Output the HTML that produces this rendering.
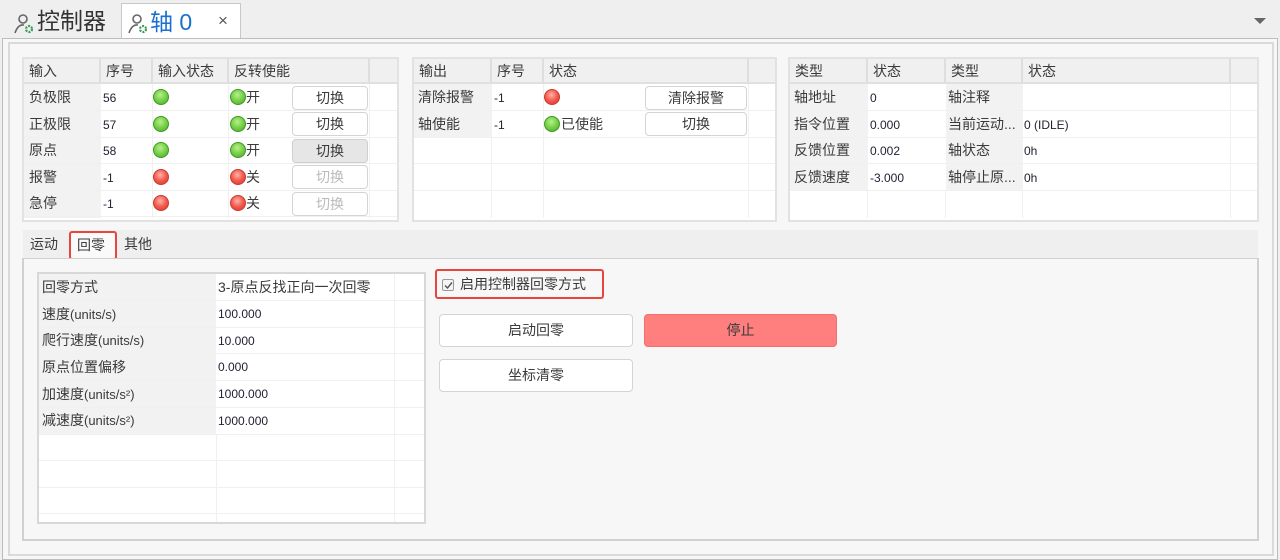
<!DOCTYPE html>
<html><head><meta charset="utf-8">
<style>
*{margin:0;padding:0;box-sizing:border-box}
body{width:1280px;height:560px;background:#efefef;position:relative;overflow:hidden;font-family:"Liberation Sans","Noto Sans CJK SC",sans-serif;color:#3a3a3a}
.a{position:absolute}
.cell{position:absolute;font-size:14px;line-height:26px;padding-left:5px;white-space:nowrap;overflow:hidden}
.num{font-size:12px;color:#223}
.hd{position:absolute;background:#f0f0f0;border-right:2px solid #dedede;border-bottom:2px solid #e0e0e0;font-size:14px;line-height:24px;padding-left:5px;color:#3a3a3a}
.hl{position:absolute;height:1px;background:#f0f0f0}
.vl{position:absolute;width:1px;background:#f0f0f0}
.led{position:absolute;width:16px;height:16px;border-radius:50%}
.g{background:radial-gradient(circle at 45% 35%,#b8ef8e 0,#7cd34c 45%,#4aa82a 100%);border:1px solid #3d9a26}
.r{background:radial-gradient(circle at 45% 35%,#ffb3a8 0,#f25a4e 50%,#d8342a 100%);border:1px solid #cc3a30}
.btn{position:absolute;background:#fff;border:1px solid #d4d4d4;border-radius:4px;text-align:center;font-size:14px;color:#3a3a3a}
.dis{color:#bbb}
.tbl{position:absolute;background:#fff;border:2px solid #e2e2e2}
</style></head><body>
<!-- tab bar -->
<div class="a" style="left:8px;top:4px;width:113px;height:34px">
<svg class="a" style="left:4px;top:9px" width="26" height="22" viewBox="0 0 26 22"><circle cx="11" cy="6" r="4" fill="none" stroke="#666" stroke-width="1.6"/><path d="M3 20 Q6 11 12 12" fill="none" stroke="#666" stroke-width="1.6"/><circle cx="17" cy="16" r="3" fill="none" stroke="#3a9a55" stroke-width="2.2" stroke-dasharray="2 1.2"/></svg>
<div class="a" style="left:29px;top:0;font-size:23px;line-height:34px;color:#333">控制器</div></div>
<div class="a" style="left:121px;top:3px;width:120px;height:36px;background:#fff;border:1px solid #c8c8c8;border-bottom:none">
<svg class="a" style="left:4px;top:9px" width="26" height="22" viewBox="0 0 26 22"><circle cx="11" cy="6" r="4" fill="none" stroke="#666" stroke-width="1.6"/><path d="M3 20 Q6 11 12 12" fill="none" stroke="#666" stroke-width="1.6"/><circle cx="17" cy="16" r="3" fill="none" stroke="#3a9a55" stroke-width="2.2" stroke-dasharray="2 1.2"/></svg>
<div class="a" style="left:28px;top:1px;font-size:23px;line-height:34px;color:#1b6fd1">轴 0</div>
<div class="a" style="left:96px;top:6px;font-size:17px;line-height:22px;color:#555">×</div></div>
<div class="a" style="left:1254px;top:18px;width:0;height:0;border-left:6px solid transparent;border-right:6px solid transparent;border-top:6px solid #666"></div>
<!-- outer panel -->
<div class="a" style="left:2px;top:38px;width:1276px;height:522px;background:#f7f7f7;border:1px solid #bdbdbd"></div>
<div class="a" style="left:8px;top:42px;width:1266px;height:514px;border:2px solid #dadada"></div>

<!-- Table 1 -->
<div class="tbl" style="left:22px;top:57px;width:377px;height:165px"></div>
<div class="hd" style="left:24px;top:59px;width:77px;height:25px">输入</div>
<div class="hd" style="left:101px;top:59px;width:52px;height:25px">序号</div>
<div class="hd" style="left:153px;top:59px;width:76px;height:25px">输入状态</div>
<div class="hd" style="left:229px;top:59px;width:141px;height:25px">反转使能</div>
<div class="hd" style="left:370px;top:59px;width:27px;height:25px;border-right:none"></div>
<div class="a" style="left:24px;top:84px;width:77px;height:134px;background:#f2f2f2"></div>
<div class="vl" style="left:152px;top:84px;height:134px"></div>
<div class="vl" style="left:228px;top:84px;height:134px"></div>
<div class="vl" style="left:369px;top:84px;height:134px"></div>
<div class="hl" style="left:24px;top:110px;width:373px"></div>
<div class="hl" style="left:24px;top:137px;width:373px"></div>
<div class="hl" style="left:24px;top:163px;width:373px"></div>
<div class="hl" style="left:24px;top:190px;width:373px"></div>
<div class="hl" style="left:24px;top:216px;width:373px"></div>

<div class="cell" style="left:24px;top:84px">负极限</div><div class="cell num" style="left:98px;top:85px">56</div>
<div class="cell" style="left:24px;top:111px">正极限</div><div class="cell num" style="left:98px;top:112px">57</div>
<div class="cell" style="left:24px;top:137px">原点</div><div class="cell num" style="left:98px;top:138px">58</div>
<div class="cell" style="left:24px;top:164px">报警</div><div class="cell num" style="left:98px;top:165px">-1</div>
<div class="cell" style="left:24px;top:190px">急停</div><div class="cell num" style="left:98px;top:191px">-1</div>
<div class="led g" style="left:153px;top:89px"></div><div class="led g" style="left:230px;top:89px"></div><div class="cell" style="left:241px;top:84px">开</div>
<div class="led g" style="left:153px;top:116px"></div><div class="led g" style="left:230px;top:116px"></div><div class="cell" style="left:241px;top:111px">开</div>
<div class="led g" style="left:153px;top:142px"></div><div class="led g" style="left:230px;top:142px"></div><div class="cell" style="left:241px;top:137px">开</div>
<div class="led r" style="left:153px;top:169px"></div><div class="led r" style="left:230px;top:169px"></div><div class="cell" style="left:241px;top:164px">关</div>
<div class="led r" style="left:153px;top:195px"></div><div class="led r" style="left:230px;top:195px"></div><div class="cell" style="left:241px;top:190px">关</div>
<div class="btn" style="left:292px;top:86px;width:76px;height:24px;line-height:22px">切换</div>
<div class="btn" style="left:292px;top:112px;width:76px;height:24px;line-height:22px">切换</div>
<div class="btn" style="left:292px;top:139px;width:76px;height:24px;line-height:22px;background:#e6e6e6;border-color:#cfcfcf">切换</div>
<div class="btn dis" style="left:292px;top:165px;width:76px;height:24px;line-height:22px">切换</div>
<div class="btn dis" style="left:292px;top:192px;width:76px;height:24px;line-height:22px">切换</div>

<!-- Table 2 -->
<div class="tbl" style="left:412px;top:57px;width:365px;height:165px"></div>
<div class="hd" style="left:414px;top:59px;width:78px;height:25px">输出</div>
<div class="hd" style="left:492px;top:59px;width:52px;height:25px">序号</div>
<div class="hd" style="left:544px;top:59px;width:205px;height:25px">状态</div>
<div class="hd" style="left:749px;top:59px;width:26px;height:25px;border-right:none"></div>
<div class="a" style="left:414px;top:84px;width:78px;height:53px;background:#f2f2f2"></div>
<div class="vl" style="left:491px;top:137px;height:81px"></div>
<div class="vl" style="left:543px;top:84px;height:134px"></div>
<div class="vl" style="left:748px;top:84px;height:134px"></div>
<div class="hl" style="left:414px;top:110px;width:361px"></div>
<div class="hl" style="left:414px;top:137px;width:361px"></div>
<div class="hl" style="left:414px;top:163px;width:361px"></div>
<div class="hl" style="left:414px;top:190px;width:361px"></div>
<div class="cell" style="left:413px;top:84px">清除报警</div><div class="cell num" style="left:489px;top:85px">-1</div>
<div class="cell" style="left:413px;top:111px">轴使能</div><div class="cell num" style="left:489px;top:112px">-1</div>
<div class="led r" style="left:544px;top:89px"></div>
<div class="led g" style="left:544px;top:116px"></div><div class="cell" style="left:556px;top:111px">已使能</div>
<div class="btn" style="left:645px;top:86px;width:102px;height:24px;line-height:22px">清除报警</div>
<div class="btn" style="left:645px;top:112px;width:102px;height:24px;line-height:22px">切换</div>

<!-- Table 3 -->
<div class="tbl" style="left:788px;top:57px;width:471px;height:165px"></div>
<div class="hd" style="left:790px;top:59px;width:78px;height:25px">类型</div>
<div class="hd" style="left:868px;top:59px;width:78px;height:25px">状态</div>
<div class="hd" style="left:946px;top:59px;width:77px;height:25px">类型</div>
<div class="hd" style="left:1023px;top:59px;width:208px;height:25px">状态</div>
<div class="hd" style="left:1231px;top:59px;width:26px;height:25px;border-right:none"></div>
<div class="a" style="left:790px;top:84px;width:78px;height:106px;background:#f2f2f2"></div>
<div class="a" style="left:946px;top:84px;width:77px;height:106px;background:#f2f2f2"></div>
<div class="vl" style="left:867px;top:190px;height:28px"></div>
<div class="vl" style="left:945px;top:190px;height:28px"></div>
<div class="vl" style="left:1022px;top:190px;height:28px"></div>
<div class="vl" style="left:1230px;top:84px;height:134px"></div>
<div class="hl" style="left:790px;top:110px;width:467px"></div>
<div class="hl" style="left:790px;top:137px;width:467px"></div>
<div class="hl" style="left:790px;top:163px;width:467px"></div>
<div class="hl" style="left:790px;top:190px;width:467px"></div>
<div class="cell" style="left:789px;top:84px">轴地址</div><div class="cell num" style="left:865px;top:85px">0</div><div class="cell" style="left:943px;top:84px">轴注释</div>
<div class="cell" style="left:789px;top:111px">指令位置</div><div class="cell num" style="left:865px;top:112px">0.000</div><div class="cell" style="left:943px;top:111px">当前运动...</div><div class="cell num" style="left:1019px;top:112px">0 (IDLE)</div>
<div class="cell" style="left:789px;top:137px">反馈位置</div><div class="cell num" style="left:865px;top:138px">0.002</div><div class="cell" style="left:943px;top:137px">轴状态</div><div class="cell num" style="left:1019px;top:138px">0h</div>
<div class="cell" style="left:789px;top:164px">反馈速度</div><div class="cell num" style="left:865px;top:165px">-3.000</div><div class="cell" style="left:943px;top:164px">轴停止原...</div><div class="cell num" style="left:1019px;top:165px">0h</div>

<!-- tabs -->
<div class="a" style="left:23px;top:230px;width:1235px;height:28px;background:#efefef"></div>
<div class="cell" style="left:25px;top:231px">运动</div>
<div class="a" style="left:69px;top:231px;width:48px;height:29px;border:2px solid #e8453c;border-radius:3px;background:#fafafa"></div>
<div class="cell" style="left:72px;top:232px">回零</div>
<div class="cell" style="left:119px;top:231px">其他</div>
<div class="a" style="left:22px;top:258px;width:1237px;height:283px;border:2px solid #d0d0d0;border-top:1px solid #d0d0d0;background:#f7f7f7"></div>

<!-- params table -->
<div class="tbl" style="left:37px;top:272px;width:389px;height:252px;border-color:#d8d8d8"></div>
<div class="a" style="left:39px;top:274px;width:177px;height:160px;background:#f2f2f2"></div>
<div class="vl" style="left:216px;top:434px;height:88px"></div>
<div class="vl" style="left:394px;top:274px;height:248px"></div>
<div class="hl" style="left:39px;top:300px;width:385px"></div>
<div class="hl" style="left:39px;top:327px;width:385px"></div>
<div class="hl" style="left:39px;top:353px;width:385px"></div>
<div class="hl" style="left:39px;top:380px;width:385px"></div>
<div class="hl" style="left:39px;top:407px;width:385px"></div>
<div class="hl" style="left:39px;top:434px;width:385px"></div>
<div class="hl" style="left:39px;top:460px;width:385px"></div>
<div class="hl" style="left:39px;top:487px;width:385px"></div>
<div class="hl" style="left:39px;top:513px;width:385px"></div>
<div class="cell" style="left:37px;top:274px">回零方式</div><div class="cell" style="left:213px;top:274px">3-原点反找正向一次回零</div>
<div class="cell" style="left:37px;top:301px">速度<span style="font-size:13px">(units/s)</span></div><div class="cell num" style="left:213px;top:301px">100.000</div>
<div class="cell" style="left:37px;top:327px">爬行速度<span style="font-size:13px">(units/s)</span></div><div class="cell num" style="left:213px;top:328px">10.000</div>
<div class="cell" style="left:37px;top:354px">原点位置偏移</div><div class="cell num" style="left:213px;top:354px">0.000</div>
<div class="cell" style="left:37px;top:381px">加速度<span style="font-size:13px">(units/s²)</span></div><div class="cell num" style="left:213px;top:381px">1000.000</div>
<div class="cell" style="left:37px;top:407px">减速度<span style="font-size:13px">(units/s²)</span></div><div class="cell num" style="left:213px;top:408px">1000.000</div>

<!-- right controls -->
<div class="a" style="left:435px;top:269px;width:169px;height:30px;border:2px solid #e8453c;border-radius:3px"></div>
<div class="a" style="left:442px;top:279px;width:12px;height:12px;border:1px solid #999;border-radius:2px;background:#f4f4f4"></div>
<svg class="a" style="left:443px;top:280px" width="11" height="11" viewBox="0 0 11 11"><path d="M2 5.5 L4.5 8 L9 2.5" fill="none" stroke="#555" stroke-width="1.4"/></svg>
<div class="cell" style="left:455px;top:271px">启用控制器回零方式</div>
<div class="btn" style="left:439px;top:314px;width:194px;height:33px;line-height:31px">启动回零</div>
<div class="btn" style="left:644px;top:314px;width:193px;height:33px;line-height:31px;background:#ff7e7e;border-color:#f07070">停止</div>
<div class="btn" style="left:439px;top:359px;width:194px;height:33px;line-height:31px">坐标清零</div>
</body></html>
